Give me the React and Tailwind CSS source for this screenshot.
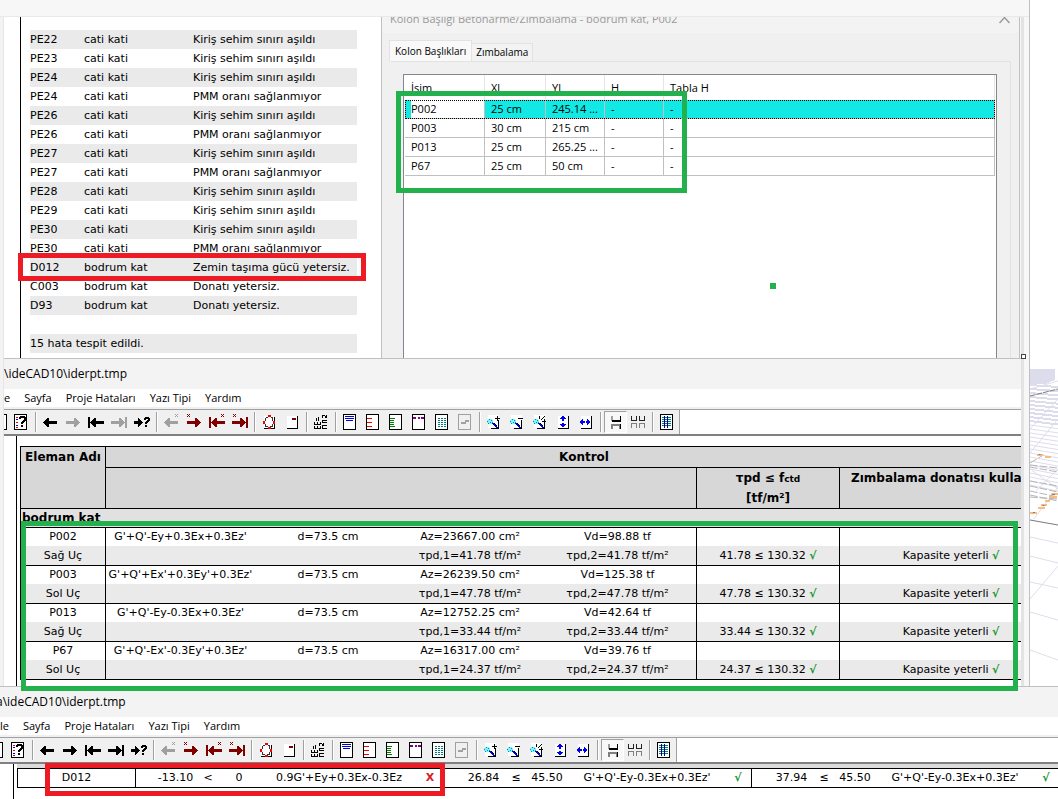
import React from "react";

const errors = [
  ["PE22", "cati kati", "Kiriş sehim sınırı aşıldı"],
  ["PE23", "cati kati", "Kiriş sehim sınırı aşıldı"],
  ["PE24", "cati kati", "Kiriş sehim sınırı aşıldı"],
  ["PE24", "cati kati", "PMM oranı sağlanmıyor"],
  ["PE26", "cati kati", "Kiriş sehim sınırı aşıldı"],
  ["PE26", "cati kati", "PMM oranı sağlanmıyor"],
  ["PE27", "cati kati", "Kiriş sehim sınırı aşıldı"],
  ["PE27", "cati kati", "PMM oranı sağlanmıyor"],
  ["PE28", "cati kati", "Kiriş sehim sınırı aşıldı"],
  ["PE29", "cati kati", "Kiriş sehim sınırı aşıldı"],
  ["PE30", "cati kati", "Kiriş sehim sınırı aşıldı"],
  ["PE30", "cati kati", "PMM oranı sağlanmıyor"],
  ["D012", "bodrum kat", "Zemin taşıma gücü yetersiz."],
  ["C003", "bodrum kat", "Donatı yetersiz."],
  ["D93", "bodrum kat", "Donatı yetersiz."],
];

const heads = [
  ["P002", "25 cm", "245.14 ...", "-", "-"],
  ["P003", "30 cm", "215 cm", "-", "-"],
  ["P013", "25 cm", "265.25 ...", "-", "-"],
  ["P67", "25 cm", "50 cm", "-", "-"],
];

const checks = [
  { name: "P002", end: "Sağ Uç", combo: "G'+Q'-Ey+0.3Ex+0.3Ez'", az: "23667.00", vd: "98.88", t: "41.78" },
  { name: "P003", end: "Sol Uç", combo: "G'+Q'+Ex'+0.3Ey'+0.3Ez'", az: "26239.50", vd: "125.38", t: "47.78" },
  { name: "P013", end: "Sağ Uç", combo: "G'+Q'-Ey-0.3Ex+0.3Ez'", az: "12752.25", vd: "42.64", t: "33.44" },
  { name: "P67", end: "Sol Uç", combo: "G'+Q'-Ex'-0.3Ey'+0.3Ez'", az: "16317.00", vd: "39.76", t: "24.37" },
];

const soil = [
  ["-13.10", "<", "0", "0.9G'+Ey+0.3Ex-0.3Ez", false],
  ["26.84", "≤", "45.50", "G'+Q'-Ey-0.3Ex+0.3Ez'", true],
  ["37.94", "≤", "45.50", "G'+Q'-Ey-0.3Ex+0.3Ez'", true],
];

/* ---------- toolbar glyphs, drawn on a 16 x 16 pixel grid ---------- */

function Glyph({ children }) {
  return (
    <svg viewBox="0 0 16 16" className="size-4 shrink-0" shapeRendering="crispEdges" fill="none" aria-hidden="true">
      {children}
    </svg>
  );
}

const ARROW_L = "M1 8h1V7h1V6h1V5h1V4h2v3h8v3H7v3H5v-1H4v-1H3v-1H2V9H1z";
const ARROW_R = "M15 8h-1V7h-1V6h-1V5h-1V4H9v3H1v3h8v3h2v-1h1v-1h1v-1h1V9h1z";
const BAR_L = "M0 3h2v11H0zM2 8h1V7h1V6h1V5h1V4h2v3h8v3H8v3H6v-1H5v-1H4v-1H3V9H2z";
const BAR_R = "M14 3h2v11h-2zM14 8h-1V7h-1V6h-1V5h-1V4H8v3H0v3h8v3h2v-1h1v-1h1v-1h1V9h1z";

function Page({ children, color = "#000", fill = "#fff" }) {
  return (
    <Glyph>
      <path d="M1 0h13v16H1z" fill={color} />
      <path d="M2 1h11v14H2z" fill={fill} />
      {children}
    </Glyph>
  );
}

function ArrowGlyph({ dir, color, bar, mark }) {
  const left = bar ? BAR_L : ARROW_L;
  const right = bar ? BAR_R : ARROW_R;
  return (
    <Glyph>
      <path d={dir === "l" ? left : right} fill={color} />
      {mark === "l" && <path d="M2 1h1v1H2zM1 0h1v1H1zM3 0h1v1H3zM1 2h1v1H1zM3 2h1v1H3z" fill={color} />}
      {mark === "r" && <path d="M13 1h1v1h-1zM12 0h1v1h-1zM14 0h1v1h-1zM12 2h1v1h-1zM14 2h1v1h-1z" fill={color} />}
    </Glyph>
  );
}

function Lens({ children }) {
  return (
    <Glyph>
      <rect x="2" y="1" width="11" height="13" fill="#fff" />
      <path d="M13 6v9H5v-1h7V6z" fill="#000" />
      <path d="M2 5h4v1h1v3H6v1H2V9H1V6h1z" fill="#7df3fb" />
      <path d="M3 5h1v1H3zM5 6h1v1H5zM1 7h1v1H1zM4 8h1v1H4zM6 8h1v1H6zM2 9h1v1H2z" fill="#0b8ca0" />
      <path d="M6 9h2v1h1v1h1v1h1v1h1v1h-2v-1H9v-1H8v-1H7v-1H6z" fill="#0000d8" />
      <path d="M8 9h1v1h1v1h1v1h-1v-1H9v-1H8z" fill="#000" />
      {children}
    </Glyph>
  );
}

const MAROON = "#800000";
const GREY = "#a0a0a0";

const icons = {
  help: (
    <Page>
      <path d="M3 3h2v1H3zM3 8h2v1H3zM3 13h2v1H3z" fill="#e00000" />
      <path d="M3 5h2v1H3zM3 11h2v1H3z" fill="#0000d8" />
      <path d="M6 3h1V2h5v1h1v4h-1v1h-1v1h-1v1H8V8h1V7h1V6h1V4H8v1H6zM8 11h2v2H8z" fill="#000" />
    </Page>
  ),
  prev: <ArrowGlyph dir="l" color="#000" />,
  next: <ArrowGlyph dir="r" color="#000" />,
  nextOff: <ArrowGlyph dir="r" color={GREY} />,
  first: <ArrowGlyph dir="l" color="#000" bar />,
  last: <ArrowGlyph dir="r" color="#000" bar />,
  lastOff: <ArrowGlyph dir="r" color={GREY} bar />,
  goto: (
    <Glyph>
      <path d="M9 8H8V7H7V6H6V5H5V4H4v3H0v3h4v3h1v-1h1v-1h1v-1h1V9h1z" fill="#000" />
      <path d="M10 4h1V3h4v1h1v3h-1v1h-1v1h-1v1h-2V8h1V7h1V6h1V5h-2v1h-2zM11 11h2v2h-2z" fill="#000" />
    </Glyph>
  ),
  errPrev: <ArrowGlyph dir="l" color={GREY} mark="r" />,
  errNext: <ArrowGlyph dir="r" color={MAROON} mark="l" />,
  errFirst: <ArrowGlyph dir="l" color={MAROON} bar mark="r" />,
  errLast: <ArrowGlyph dir="r" color={MAROON} bar mark="l" />,
  fit: (
    <Glyph>
      <path d="M3 2h10v12H3z" fill="#fff" />
      <path d="M13 3h1v12H3v-1h10z" fill="#000" />
      <path d="M5 3h2v1H5zM10 3h2v1h-2zM4 4h1v3H4zM11 4h1v3h-1zM4 10h1v3H4zM11 10h1v3h-1zM5 12h2v1H5zM9 12h2v1H9z" fill="#333" />
      <path d="M7 1h3v2H7zM7 13h3v2H7zM2 7h2v3H2zM12 7h2v3h-2z" fill="#f00000" />
    </Glyph>
  ),
  corner: (
    <Glyph>
      <path d="M3 2h10v12H3z" fill="#fff" />
      <path d="M13 2h1v13H3v-1h10z" fill="#000" />
      <path d="M8 4h4v2H8z" fill={MAROON} />
    </Glyph>
  ),
  units: (
    <Glyph>
      <path d="M1 8h1v2h2V8h1v2h2V8h1v3H1zM1 12h1v2h2v-2h1v2h2v-2h1v3H1zM3 4h1v3H3zM5 3h1v4H5zM9 1h1v3H9zM10 1h2v1h-2zM12 2h1v2h-1zM13 1h1v3h-1zM10 6h4v1h-4zM10 8h4v1h-4zM9 6h1v3H9zM10 11h4v1h-4zM10 14h4v1h-4zM9 11h1v4H9z" fill="#000" />
    </Glyph>
  ),
  pageTop: (
    <Page>
      <path d="M3 2h9v1H3zM3 4h9v1H3zM4 6h7v1H4z" fill="#0000d8" />
    </Page>
  ),
  pageRed: (
    <Page>
      <path d="M2 4h5v1H2zM2 8h5v1H2zM2 12h5v1H2z" fill="#f00000" />
    </Page>
  ),
  pageGreen: (
    <Page>
      <path d="M2 4h5v1H2zM2 6h4v1H2zM2 8h4v1H2zM2 10h4v1H2zM2 12h5v1H2z" fill="#008000" />
    </Page>
  ),
  pagePurple: (
    <Page>
      <path d="M2 3h3v2H2zM7 3h2v2H7zM10 3h3v2h-3z" fill="#800080" />
    </Page>
  ),
  pageTeal: (
    <Page>
      <path d="M4 4.5h8M4 6.5h8M4 8.5h8M4 10.5h8M4 12.5h8" stroke="#008080" strokeDasharray="2 1" />
    </Page>
  ),
  pageOff: (
    <Page color={GREY} fill="#f0f0f0">
      <path d="M4 8h4V6h4v2H9v2H4z" fill={GREY} />
    </Page>
  ),
  zoomIn: (
    <Lens>
      <path d="M11 2h1v2h2v1h-2v2h-1V5H9V4h2z" fill="#000" />
    </Lens>
  ),
  zoomOut: (
    <Lens>
      <path d="M9 4h5v1H9z" fill="#000" />
    </Lens>
  ),
  zoomFit: (
    <Lens>
      <path d="M7 2h1v3H7zM12 2h1v1h-1zM11 3h1v1h-1zM10 4h1v1h-1zM9 5h1v1H9zM12 5h1v3h-1zM10 7h4v1h-4z" fill="#000" />
    </Lens>
  ),
  tall: (
    <Glyph>
      <path d="M3 2h10v12H3z" fill="#fff" />
      <path d="M13 2h1v13H3v-1h10z" fill="#000" />
      <path d="M7 2h2v1h1v1h1v1H9v2H7V5H5V4h1V3h1zM7 9h2v1h2v1h-1v1H9v1H7v-1H6v-1H5v-1h2z" fill="#0000f0" />
    </Glyph>
  ),
  wide: (
    <Glyph>
      <path d="M3 2h10v12H3z" fill="#fff" />
      <path d="M13 2h1v13H3v-1h10z" fill="#000" />
      <path d="M2 7h1V6h1V5h1v2h2v2H5v2H4v-1H3V9H2zM12 7h-1V6h-1V5H9v2H8v2h1v2h1v-1h1V9h1z" fill="#0000f0" />
    </Glyph>
  ),
  single: (
    <Glyph>
      <path d="M4 2h2v5H4z" fill="#a0a0a0" />
      <path d="M5 6h8V2h1v6H5z" fill="#000" />
      <path d="M4 10h10v5h-2v-3H6v3H4z" fill="#808080" />
      <path d="M13 10h1v5h-1z" fill="#000" />
    </Glyph>
  ),
  multi: (
    <Glyph>
      <path d="M1 2h1v4h4V2h1v5H1zM9 2h1v4h4V2h1v5H9z" fill="#222" />
      <path d="M1 9h6v5H6v-4H2v4H1zM9 9h6v5h-1v-4h-4v4H9z" fill="#808080" />
    </Glyph>
  ),
  grid: (
    <Page>
      <path d="M3 3h9v1H3zM3 5h9v1H3zM3 7h9v1H3zM3 9h9v1H3zM3 11h9v1H3z" fill="#008080" />
      <path d="M5 2h1v12H5zM8 2h1v12H8z" fill="#000080" />
    </Page>
  ),
};

const groups = (allActive) => [
  ["help"],
  ["prev", allActive ? "next" : "nextOff", "first", allActive ? "last" : "lastOff", "goto"],
  ["errPrev", "errNext", "errFirst", "errLast"],
  ["fit", "corner"],
  ["units"],
  ["pageTop", "pageRed", "pageGreen", "pagePurple", "pageTeal", "pageOff"],
  ["zoomIn", "zoomOut", "zoomFit", "tall", "wide"],
  ["single", "multi"],
  ["grid"],
];

function Toolbar({ allActive }) {
  return (
    <div className="flex h-[27px] border-t border-b-2 border-t-[#a0a0a0] border-b-[#808080] bg-white">
      <div className="flex items-center border-r border-[#a0a0a0] bg-[#f0f0f0]">
        <span className={allActive ? "flex w-[7px] items-center" : "flex w-[6px] items-center"}>
          <span className="h-4 w-[3px] border-y border-r border-black bg-white" />
        </span>
        {groups(allActive).map((names, g) => (
          <div key={g} className="flex items-center">
            {g > 0 && <span className="mx-[2px] h-5 w-[2px] border-l border-[#a0a0a0] bg-white" />}
            {names.map((n) => (
              <button
                key={n}
                type="button"
                aria-label={n}
                className={
                  n === "single"
                    ? "flex h-[22px] w-[23px] items-center justify-start border border-t-[#a0a0a0] border-r-white border-b-white border-l-[#a0a0a0] bg-[#f8f8f8] pl-[2px]"
                    : "flex h-[22px] w-[23px] items-center justify-start pl-[3px]"
                }
              >
                {icons[n]}
              </button>
            ))}
          </div>
        ))}
      </div>
    </div>
  );
}

function WindowBars({ title, first, allActive }) {
  return (
    <>
      <div className="flex h-[31px] items-center overflow-hidden border-t border-[#c0c0c0] bg-[#f3f3f3] font-['Open_Sans',sans-serif] text-[12px] whitespace-nowrap">
        <span className={allActive ? "-ml-1" : ""}>{title}</span>
      </div>
      <nav className="flex h-5 items-center gap-[14px] overflow-hidden border-b-2 border-[#f0f0f0] bg-white font-['Open_Sans',sans-serif] text-[11px] whitespace-nowrap">
        {[first, "Sayfa", "Proje Hataları", "Yazı Tipi", "Yardım"].map((m) => (
          <button key={m} type="button">
            {m}
          </button>
        ))}
      </nav>
      <Toolbar allActive={allActive} />
    </>
  );
}

function Tick() {
  return <span className="font-bold text-[#16962f]">√</span>;
}

function ErrorList() {
  return (
    <section className="relative w-[377px] shrink-0 bg-white pl-4">
      <div className="border-l border-black pt-[13px] pb-[5px] pl-[9px]">
        <table className="w-[327px] table-fixed border-separate border-spacing-0 font-['DejaVu_Sans',sans-serif] text-[11px] leading-[19px] whitespace-nowrap">
          <colgroup>
            <col className="w-[54px]" />
            <col className="w-[109px]" />
            <col />
          </colgroup>
          <tbody>
            {errors.map((row, i) => (
              <tr key={i} className="h-[19px] odd:bg-[#eaeaea]">
                {row.map((c, j) => (
                  <td key={j} className="p-0">
                    {c}
                  </td>
                ))}
              </tr>
            ))}
            <tr className="h-[19px]">
              <td colSpan={3} className="p-0" />
            </tr>
            <tr className="h-[19px] bg-[#eaeaea]">
              <td colSpan={3} className="p-0">
                15 hata tespit edildi.
              </td>
            </tr>
          </tbody>
        </table>
      </div>
      <div className="pointer-events-none absolute top-[236px] left-[14px] z-10 h-7 w-[348px] border-[5px] border-[#ed1c24]" />
    </section>
  );
}

function HeadsDialog() {
  return (
    <section className="relative flex min-w-0 flex-1 flex-col border-x border-[#c0c0c0] bg-[#f0f0f0] font-['Open_Sans',sans-serif] text-[11px] text-black">
      <header className="flex h-4 justify-between overflow-hidden bg-[#f3f3f3] pr-[9px] pl-2 text-[#999]">
        <span className="-mt-[7px] leading-[18px] whitespace-nowrap">Kolon Başlığı Betonarme/Zımbalama - bodrum kat, P002</span>
        <button type="button" aria-label="Kapat" className="-mt-1 size-[11px]">
          <svg viewBox="0 0 11 11" className="size-[11px]" fill="none" stroke="#999" strokeWidth="1.4">
            <path d="M5.5 4.5 10.5 10M5.5 4.5 0.5 10" />
          </svg>
        </button>
      </header>
      <div role="tablist" className="mt-[7px] flex items-end pl-[7px] text-[10px] leading-[18px]">
        <button type="button" role="tab" aria-selected="true" className="h-[21px] border border-b-0 border-[#e2e2e2] bg-[#f9f9f9] px-[5px]">
          Kolon Başlıkları
        </button>
        <button type="button" role="tab" aria-selected="false" className="h-[18px] border border-b-0 border-l-0 border-[#e2e2e2] bg-[#f3f3f3] px-1 leading-[17px]">
          Zımbalama
        </button>
      </div>
      <div className="mr-2 ml-[9px] flex flex-1 flex-col border-t border-r border-[#e2e2e2] pt-3 pr-[13px] pl-3">
        <div className="flex-1 border border-b-0 border-[#828790] bg-white pr-px pl-px">
          <table className="w-full table-fixed border-separate border-spacing-0 leading-[18px] whitespace-nowrap">
            <colgroup>
              <col className="w-20" />
              <col className="w-[61px]" />
              <col className="w-[59px]" />
              <col className="w-[59px]" />
              <col />
            </colgroup>
            <thead>
              <tr className="h-[25px] text-left">
                {["İsim", "Xl", "Yl", "H", "Tabla H"].map((h) => (
                  <th key={h} className="border-r border-[#e5e5e5] p-0 pl-[6px] font-normal">
                    {h}
                  </th>
                ))}
              </tr>
            </thead>
            <tbody>
              {heads.map((r, i) => (
                <tr key={r[0]} className={i === 0 ? "h-[19px] bg-[#12e8e4] outline-1 -outline-offset-1 outline-black outline-dotted" : "h-[19px]"}>
                  {r.map((c, j) => (
                    <td key={j} className="border-r border-b border-[#c0c0c0] p-0 pl-[6px]">
                      {i === 0 && j === 0 ? <span className="block bg-white">{c}</span> : c}
                    </td>
                  ))}
                </tr>
              ))}
            </tbody>
          </table>
        </div>
      </div>
      <div className="pointer-events-none absolute top-[74px] left-[14px] h-[102px] w-[291px] border-[5px] border-[#22b14c]" />
      <div className="absolute top-[266px] left-[388px] size-[6px] bg-[#22b14c]" />
    </section>
  );
}

function CheckReport() {
  const th = "border-t border-l border-black p-0 align-top text-[12px] font-bold";
  return (
    <div className="relative bg-white pl-3">
      <div className="overflow-hidden border-l border-black pt-[10px] pb-[6px] pl-[3px]">
        <table className="w-[1042px] table-fixed border-separate border-spacing-0 border-b border-black text-center font-['DejaVu_Sans',sans-serif] text-[11px] whitespace-nowrap">
          <colgroup>
            <col className="w-[85px]" />
            <col className="w-[150px]" />
            <col className="w-[146px]" />
            <col className="w-[138px]" />
            <col className="w-[157px]" />
            <col className="w-[143px]" />
            <col />
          </colgroup>
          <thead className="bg-[#d7d7d7] leading-5">
            <tr className="h-[21px]">
              <th rowSpan={2} className={th}>
                Eleman Adı
              </th>
              <th colSpan={6} className={th}>
                Kontrol
              </th>
            </tr>
            <tr className="h-[41px]">
              <th colSpan={4} className={th} />
              <th className={th}>
                τpd ≤ f<span className="text-[9px] leading-none">ctd</span>
                <br />
                [tf/m²]
              </th>
              <th className="border-t border-l border-black p-0 pl-[11px] text-left align-top text-[12px] font-bold">Zımbalama donatısı kulla</th>
            </tr>
          </thead>
          <tbody className="leading-[18px]">
            <tr className="h-[19px] bg-[#e1e1e1]">
              <th colSpan={7} className="border-t border-l border-black p-0 pl-px text-left text-[12px] font-bold">
                bodrum kat
              </th>
            </tr>
            {checks.map((c) => (
              <React.Fragment key={c.name}>
                <tr className="h-[19px]">
                  <td className="border-t border-l border-black p-0">{c.name}</td>
                  <td className="border-t border-l border-black p-0">{c.combo}</td>
                  <td className="border-t border-black p-0">d=73.5 cm</td>
                  <td className="border-t border-black p-0">Az={c.az} cm²</td>
                  <td className="border-t border-black p-0">Vd={c.vd} tf</td>
                  <td className="border-t border-l border-black p-0" />
                  <td className="border-t border-l border-black p-0" />
                </tr>
                <tr className="h-[19px] bg-[#eaeaea]">
                  <td className="border-l border-black p-0">{c.end}</td>
                  <td className="border-l border-black p-0" />
                  <td className="p-0" />
                  <td className="p-0">τpd,1={c.t} tf/m²</td>
                  <td className="p-0">τpd,2={c.t} tf/m²</td>
                  <td className="border-l border-black p-0">
                    {c.t} ≤ 130.32 <Tick />
                  </td>
                  <td className="border-l border-black p-0">
                    Kapasite yeterli <Tick />
                  </td>
                </tr>
              </React.Fragment>
            ))}
          </tbody>
        </table>
      </div>
      <div className="pointer-events-none absolute top-[85px] right-[3px] left-[17px] z-10 h-[170px] border-[5px] border-[#22b14c]" />
    </div>
  );
}

function SoilReport() {
  return (
    <div className="relative flex-1 bg-white pl-[13px]">
      <div className="h-[35px] overflow-hidden border-l border-black pl-[3px]">
        <div className="h-1 bg-[#dcdcdc]" />
        <table className="w-[1042px] table-fixed border-separate border-spacing-0 border-y border-black text-center font-['DejaVu_Sans',sans-serif] text-[11px] leading-[18px] whitespace-nowrap">
          <colgroup>
            <col className="w-[118px]" />
            {soil.map((s, i) => (
              <React.Fragment key={i}>
                <col className="w-[60px]" />
                <col className="w-[26px]" />
                <col className="w-[36px]" />
                <col className="w-[164px]" />
                <col className="w-[22px]" />
              </React.Fragment>
            ))}
          </colgroup>
          <tbody>
            <tr className="h-[18px]">
              <td className="border-l border-black p-0">D012</td>
              {soil.map(([v, sign, limit, combo, ok], i) => (
                <React.Fragment key={i}>
                  <td className="border-l border-black p-0 pl-5">{v}</td>
                  <td className="p-0">{sign}</td>
                  <td className="p-0">{limit}</td>
                  <td className="p-0">{combo}</td>
                  <td className="p-0 pr-1">{ok ? <Tick /> : <span className="font-bold text-[#d81e28]">X</span>}</td>
                </React.Fragment>
              ))}
            </tr>
          </tbody>
        </table>
      </div>
      <div className="pointer-events-none absolute -top-px left-[45px] h-[33px] w-[400px] border-[5px] border-[#ed1c24]" />
    </div>
  );
}

function ModelView() {
  const dense = [];
  for (let i = 0; i < 26; i++) {
    const y = 16 + i * 4;
    dense.push(<path key={i} d={`M0 ${y}L29 ${y + 2 + i / 6}`} stroke="#dcdcec" strokeWidth={i < 10 ? 2 : 1} />);
  }
  return (
    <svg viewBox="0 0 29 317" className="mt-[369px] h-[317px] w-full" preserveAspectRatio="none" shapeRendering="crispEdges" fill="none" aria-hidden="true">
      <path d="M0 0H26V11L16 15H0z" fill="#dcdcec" />
      {dense}
      <path d="M0 20L29 12M0 60L29 30M0 84L29 50M6 122L29 100M0 230L29 197M0 100L29 120M4 150L29 118" stroke="#dcdcec" />
      <path d="M0 27L29 20" stroke="#777" strokeDasharray="6 1" />
      <path d="M0 96L29 99M0 98L29 103M0 94L14 86M0 112L29 117M0 117L29 123M0 122L29 128M0 126L29 132M0 128L29 130" stroke="#b4b4b4" strokeDasharray="8 2" />
      <path d="M7 85.5h6M16 87.5h6M22 124.5h7M20 127.5h8M16 131.5h5M11 135.5h7M8 138.5h8M0 143.5h7" stroke="#f5bd85" strokeWidth="2" />
      <path d="M9 85.5h2M23 125.5h3M13 136.5h2M3 143.5h2" stroke="#a0714a" />
      <path d="M0 151L29 156" stroke="#777" />
      <path d="M0 168L29 174M0 187L29 194M0 213L29 219M0 243L29 251M0 281L29 291" stroke="#dcdcec" />
    </svg>
  );
}

export default function App() {
  return (
    <div className="flex min-h-screen flex-col overflow-hidden bg-white text-black">
      <div className="flex">
        <div className="flex min-w-0 flex-1 flex-col border-r border-[#c0c0c0] bg-[#f7f7f7]">
          <div className="h-4 bg-[#f7f7f7]" />
          <div className="flex border-t border-[#e9e9e9]">
            <div className="w-1 shrink-0 border-r border-[#e6e6e6] bg-[#f3f3f3]" />
            <main className="relative flex min-w-0 flex-1 flex-col">
              <div className="flex pr-px">
                <ErrorList />
                <HeadsDialog />
              </div>
              <WindowBars title="\ideCAD10\iderpt.tmp" first="e" />
              <CheckReport />
              <div className="absolute top-[337px] -right-[5px] size-[5px] border border-[#444] bg-white" />
            </main>
            <div className="w-2 shrink-0 border-l-3 border-[#e3e3e3] bg-[#f7f7f7]" />
          </div>
        </div>
        <div className="w-7 shrink-0 bg-white">
          <ModelView />
        </div>
      </div>
      <section className="flex flex-1 flex-col">
        <WindowBars title="a\ideCAD10\iderpt.tmp" first="le" allActive />
        <SoilReport />
      </section>
    </div>
  );
}
